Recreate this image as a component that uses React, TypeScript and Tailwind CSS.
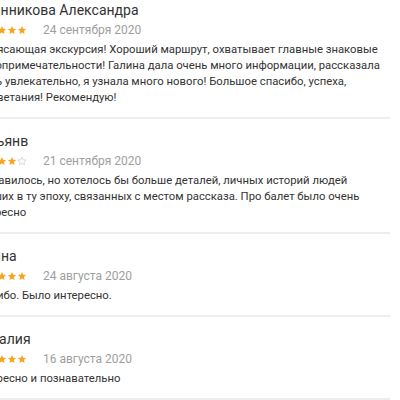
import React from "react";

type Review = { name: string; rating: number; date: string; text: string };

const reviews: Review[] = [
  {
    name: "Иванникова Александра",
    rating: 5,
    date: "24 сентября 2020",
    text:
      "Потрясающая экскурсия! Хороший маршрут, охватывает главные знаковые достопримечательности! Галина дала очень много информации, рассказала очень увлекательно, я узнала много нового! Большое спасибо, успеха, процветания! Рекомендую!",
  },
  {
    name: "Татьянв",
    rating: 4,
    date: "21 сентября 2020",
    text:
      "Понравилось, но хотелось бы больше деталей, личных историй людей живших в ту эпоху, связанных с местом рассказа. Про балет было очень интересно",
  },
  { name: "Ирина", rating: 5, date: "24 августа 2020", text: "Спасибо. Было интересно." },
  { name: "Наталия", rating: 5, date: "16 августа 2020", text: "Интересно и познавательно" },
];

function Star({ filled }: { filled: boolean }) {
  return (
    <svg width="10" height="10" viewBox="0 0 24 24" className="shrink-0">
      <path
        d="M12 2.5l2.9 6.6 7.1.6-5.4 4.7 1.6 7-6.2-3.7-6.2 3.7 1.6-7L2 9.7l7.1-.6z"
        fill={filled ? "#f5a623" : "none"}
        stroke={filled ? "#f5a623" : "#c8c8c8"}
        strokeWidth={filled ? 0 : 1.6}
        strokeLinejoin="round"
      />
    </svg>
  );
}

export default function App() {
  return (
    <div className="w-[400px] h-[400px] overflow-hidden bg-white font-[Roboto,'Noto_Sans',sans-serif]">
      <div className="-ml-[29px] w-[419px] -mt-[12px]">
        {reviews.map((r, i) => (
          <div key={i} className="pt-[12px] pb-[11px] border-b-2 border-[#eeeeee]">
            <div className="ml-[4px] text-[14px] leading-[20px] text-[#333333] whitespace-nowrap">
              {r.name}
            </div>
            <div className="flex items-center h-[20px]">
              <div className="flex ml-[6px]">
                {[0, 1, 2, 3, 4].map((s) => (
                  <Star key={s} filled={s < r.rating} />
                ))}
              </div>
              <span className="ml-[16px] text-[12px] text-[#9e9e9e]">{r.date}</span>
            </div>
            <p className="mt-[2px] text-[11.3px] leading-[16px] text-[#333333]">{r.text}</p>
          </div>
        ))}
      </div>
    </div>
  );
}
